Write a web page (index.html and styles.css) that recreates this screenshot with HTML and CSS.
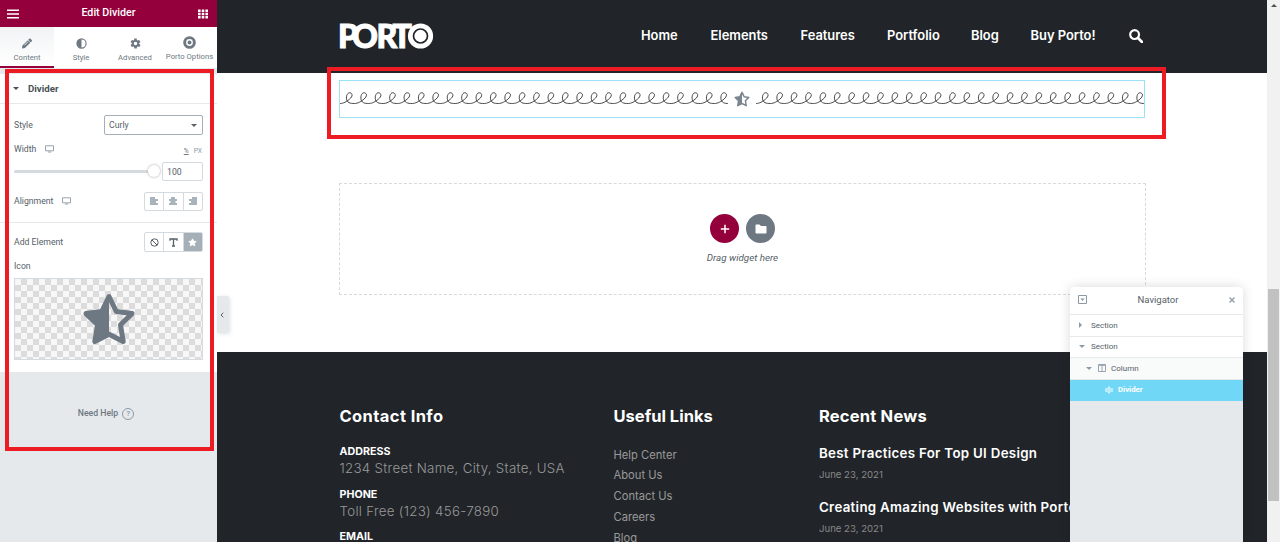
FILE: index.html
```html
<!DOCTYPE html>
<html lang="en">
<head>
    <meta charset="UTF-8">
    <meta name="viewport" content="width=device-width, initial-scale=1.0">
    <title>Edit Divider</title>
    <link rel="stylesheet" href="styles.css">
</head>
<body>
    <div class="editor">
        <aside class="panel">
            <header class="panel-header">
                <svg class="menu-icon" viewBox="0 0 12 10"><path d="M0 1.3h12M0 5h12M0 8.7h12" stroke="#fff" stroke-width="1.5"/></svg>
                <span class="panel-title">Edit Divider</span>
                <svg class="grid-icon" viewBox="0 0 10 10" fill="#fff"><path d="M0 .5h2.6v2.4H0zM3.7.5h2.6v2.4H3.7zM7.4.5H10v2.4H7.4zM0 3.8h2.6v2.4H0zM3.7 3.8h2.6v2.4H3.7zM7.4 3.8H10v2.4H7.4zM0 7.1h2.6v2.4H0zM3.7 7.1h2.6v2.4H3.7zM7.4 7.1H10v2.4H7.4z"/></svg>
            </header>
            <nav class="tabs">
                <a class="tab active">
                    <svg viewBox="0 0 512 512"><path fill="currentColor" d="M498 142l-46 46c-5 5-12 5-17 0L324 77c-5-5-5-12 0-17l46-46c19-19 49-19 68 0l60 60c19 19 19 49 0 68zM284 100L22 362 .4 484c-3 16 11 30 28 28l121-22 262-262c5-5 5-12 0-17L301 100c-5-5-12-5-17 0zM124 340c-5-5-5-14 0-19l154-154c5-5 14-5 19 0s5 14 0 19L143 340c-5 5-14 5-19 0z"/></svg>
                    <span>Content</span>
                </a>
                <a class="tab">
                    <svg viewBox="0 0 12 12"><circle cx="6" cy="6" r="5" fill="none" stroke="currentColor" stroke-width="1.2"/><path d="M6 1a5 5 0 0 0 0 10z" fill="currentColor"/></svg>
                    <span>Style</span>
                </a>
                <a class="tab">
                    <svg viewBox="1 1 22 22"><path fill="currentColor" fill-rule="evenodd" d="M19.4 13c0-.3.1-.6.1-1s0-.7-.1-1l2.1-1.6c.2-.2.3-.4.1-.7l-2-3.4c-.1-.2-.4-.3-.6-.2l-2.5 1c-.5-.4-1.1-.7-1.7-1l-.4-2.6c0-.3-.2-.5-.5-.5h-4c-.2 0-.5.2-.5.5L9.2 5.1c-.6.2-1.2.6-1.7 1l-2.5-1c-.2-.1-.5 0-.6.2l-2 3.4c-.1.3 0 .5.1.7L4.6 11c0 .3-.1.6-.1 1s0 .7.1 1l-2.1 1.6c-.2.2-.3.4-.1.7l2 3.4c.1.2.4.3.6.2l2.5-1c.5.4 1.1.7 1.7 1l.4 2.6c0 .3.3.5.5.5h4c.3 0 .5-.2.5-.5l.4-2.6c.6-.2 1.2-.6 1.7-1l2.5 1c.2.1.5 0 .6-.2l2-3.4c.1-.3.1-.5-.1-.7zM12 15.500a3.500 3.500 0 1 1 0-7 3.500 3.500 0 0 1 0 7z"/></svg>
                    <span>Advanced</span>
                </a>
                <a class="tab porto">
                    <svg viewBox="0 0 13 13"><circle cx="6.5" cy="6.5" r="6.3" fill="currentColor"/><circle cx="6.5" cy="6.5" r="2.7" fill="none" stroke="#fff" stroke-width="1.4"/></svg>
                    <span>Porto Options</span>
                </a>
            </nav>

            <div class="section-title"><i class="caret-down"></i>Divider</div>

            <div class="controls">
                <div class="control control-style">
                    <label>Style</label>
                    <div class="select">Curly<i class="caret-down"></i></div>
                </div>
                <div class="control control-width">
                    <label>Width</label>
                    <svg class="device" viewBox="0 0 9 8"><path d="M.5.8h8v5h-8zM2.8 7h3.4" fill="none" stroke="currentColor" stroke-width=".9"/></svg>
                    <div class="units"><span class="unit-active">%</span><span>PX</span></div>
                </div>
                <div class="control control-slider">
                    <div class="slider"><div class="track"></div><div class="handle"></div></div>
                    <div class="number">100</div>
                </div>
                <div class="control control-align">
                    <label>Alignment</label>
                    <svg class="device" viewBox="0 0 9 8"><path d="M.5.8h8v5h-8zM2.8 7h3.4" fill="none" stroke="currentColor" stroke-width=".9"/></svg>
                    <div class="choices">
                        <span><svg viewBox="0 0 8 8"><path d="M0 1h5M0 3h8M0 5h6M0 7h8" stroke="currentColor" stroke-width="1.5"/></svg></span>
                        <span><svg viewBox="0 0 8 8"><path d="M2 1h4M0 3h8M1.5 5h5M0 7h8" stroke="currentColor" stroke-width="1.5"/></svg></span>
                        <span><svg viewBox="0 0 8 8"><path d="M3 1h5M0 3h8M2 5h6M0 7h8" stroke="currentColor" stroke-width="1.5"/></svg></span>
                    </div>
                </div>
                <div class="control control-element">
                    <label>Add Element</label>
                    <div class="choices dark">
                        <span><svg viewBox="0 0 9 9"><circle cx="4.5" cy="4.5" r="3.7" fill="none" stroke="currentColor"/><path d="M2 2l5 5" stroke="currentColor"/></svg></span>
                        <span><svg viewBox="0 0 9 9"><path d="M1 2.800V1h7v1.800M4.500 1v7M3 8h3" fill="none" stroke="currentColor" stroke-width="1.3"/></svg></span>
                        <span class="selected"><svg viewBox="0 0 24 24"><path fill="currentColor" stroke="currentColor" stroke-width="2" stroke-linejoin="round" d="M12 2l3.100 6.300 6.900 1-5 4.900 1.200 6.900L12 17.800l-6.200 3.300L7 14.200 2 9.300l6.900-1z"/></svg></span>
                    </div>
                </div>
                <div class="control control-icon"><label>Icon</label></div>
                <div class="icon-preview">
                    <svg viewBox="0 0 54 52"><path d="M27 3.500l7.300 15L50 20.600 38.500 31.800l2.700 16.700L27 41.200 12.800 48.500l2.700-16.700L4 20.600l15.700-2.100z" fill="none" stroke="#6d7882" stroke-width="5" stroke-linejoin="round"/><path d="M27 3.500v37.700l-14.200 7.300 2.700-16.700L4 20.600l15.700-2.100z" fill="#6d7882"/></svg>
                </div>
            </div>

            <div class="help">
                <span>Need Help</span>
                <i>?</i>
            </div>
        </aside>

        <main class="preview">
            <header class="site-header">
                <svg class="logo" viewBox="0 0 96 28">
                    <text x="-1 13 37.5 53.5" y="24.8">PORT</text>
                    <circle cx="81.5" cy="13" r="12.6" fill="#fff"/>
                    <circle cx="81.5" cy="13" r="7" fill="none" stroke="#212529" stroke-width="1.7"/>
                </svg>
                <nav class="site-nav">
                    <a class="n-home">Home</a>
                    <a class="n-elements">Elements</a>
                    <a class="n-features">Features</a>
                    <a class="n-portfolio">Portfolio</a>
                    <a class="n-blog">Blog</a>
                    <a class="n-buy">Buy Porto!</a>
                </nav>
                <svg class="search" viewBox="0 0 14 14"><circle cx="5.6" cy="5.6" r="4.4" fill="none" stroke="#fff" stroke-width="2.2"/><path d="M9 9l4 4" stroke="#fff" stroke-width="2.6" stroke-linecap="round"/></svg>
            </header>

            <div class="widget">
                <svg class="curly" viewBox="0 0 388 15"><path transform="translate(0 12.5) scale(.6)"/></svg>
                <svg class="half-star" viewBox="0 0 54 52"><path d="M27 3.500l7.300 15L50 20.600 38.500 31.800l2.700 16.700L27 41.200 12.800 48.500l2.700-16.700L4 20.600l15.700-2.100z" fill="none" stroke="#7a8590" stroke-width="5" stroke-linejoin="round"/><path d="M27 3.500v37.700l-14.200 7.300 2.700-16.700L4 20.600l15.700-2.100z" fill="#7a8590"/></svg>
                <svg class="curly" viewBox="0 0 388 15"><path transform="translate(0 12.5) scale(.6)"/></svg>
            </div>

            <div class="drop-zone">
                <div class="drop-buttons">
                    <span class="add"><svg viewBox="0 0 10 10"><path d="M5 .8v8.400M.8 5h8.400" stroke="#fff" stroke-width="1.5"/></svg></span>
                    <span class="folder"><svg viewBox="0 0 12 10"><path fill="#fff" d="M1.300.500h3.200L6 2h4.700q.8 0 .8.800v5.900q0 .8-.8.800H1.300q-.8 0-.8-.8V1.300q0-.8.8-.8z"/></svg></span>
                </div>
                <p>Drag widget here</p>
            </div>

            <footer class="site-footer">
                <div class="contact">
                    <h4>Contact Info</h4>
                    <div class="contact-item"><strong>ADDRESS</strong><span>1234 Street Name, City, State, USA</span></div>
                    <div class="contact-item"><strong>PHONE</strong><span>Toll Free (123) 456-7890</span></div>
                    <div class="contact-item"><strong>EMAIL</strong></div>
                </div>
                <div class="links">
                    <h4>Useful Links</h4>
                    <a>Help Center</a>
                    <a>About Us</a>
                    <a>Contact Us</a>
                    <a>Careers</a>
                    <a>Blog</a>
                </div>
                <div class="news">
                    <h4>Recent News</h4>
                    <div class="post"><b>Best Practices For Top UI Design</b><span>June 23, 2021</span></div>
                    <div class="post"><b>Creating Amazing Websites with Porto</b><span>June 23, 2021</span></div>
                </div>
            </footer>
        </main>

        <div class="scrollbar">
            <i class="arrow-up"></i>
            <div class="thumb"></div>
        </div>

        <div class="collapse"><svg viewBox="0 0 4 6"><path d="M3.300.7L1 3l2.300 2.300" fill="none" stroke="#556068" stroke-width="1"/></svg></div>

        <div class="navigator">
            <div class="nav-title">
                <svg viewBox="0 0 9 9"><path d="M.5.5h8v8h-8z" fill="none" stroke="#8d9aa6"/><path d="M2.300 3.500h4.400L4.500 6z" fill="#8d9aa6"/></svg>
                <span>Navigator</span>
                <svg class="close" viewBox="0 0 6 6"><path d="M.5.5l5 5M5.500.5l-5 5" stroke="#8d9aa6" stroke-width="1.2"/></svg>
            </div>
            <div class="nav-row"><i class="caret-right"></i>Section</div>
            <div class="nav-row"><i class="caret-down"></i>Section</div>
            <div class="nav-row column"><i class="caret-down"></i><svg viewBox="0 0 8 8"><path d="M.5.5h7v7h-7zM4 .5v7M.5 1.300h7" fill="none" stroke="#8d9aa6" stroke-width=".9"/></svg>Column</div>
            <div class="nav-row current"><svg viewBox="0 0 8 8"><path d="M0 3h8M0 5h8" stroke="#fff" stroke-width="1"/><path d="M2.500 1.800L4 .2l1.500 1.600zM2.500 6.200L4 7.800l1.500-1.600z" fill="#fff"/></svg>Divider</div>
        </div>

        <div class="highlight highlight-panel"></div>
        <div class="highlight highlight-widget"></div>
    </div>

    <script>
        // one loop of the curly line, repeated along the divider
        const loop = 'c3.3,0,8.3-.9,15.7-7.1c6.6-5.4,4.4-9.3,2.4-10.3c-3.4-1.8-7.7,1.3-7.3,8.8c.4,7.6,6.3,8.6,13.2,8.6';
        document.querySelectorAll('.curly path').forEach(path => {
            path.setAttribute('d', 'M0,0' + loop.repeat(27));
        });
    </script>
</body>
</html>
```
FILE: styles.css
```css
:root {
    --brand: #93003c;
    --dark: #212529;
    --panel-bg: #e6e9ec;
    --text: #556068;
    --muted: #8d9aa6;
    --border: #d5dadf;
    --sky: #71d7f7;
    --red: #ed1c24;
}

* {
    margin: 0;
    padding: 0;
    box-sizing: border-box;
}

body {
    font-family: Roboto, "Liberation Sans", sans-serif;
    font-size: 8.7px;
    color: var(--text);
    overflow: hidden;
}

svg {
    display: block;
    flex: none;
}

.editor {
    position: relative;
    display: grid;
    grid-template-columns: 217px 1050px 13px;
    height: 542px;
    overflow: hidden;
}

/* left panel */
.panel {
    background: var(--panel-bg);
    overflow: hidden;
}

.panel-header {
    display: flex;
    align-items: center;
    justify-content: space-between;
    height: 27px;
    padding: 0 9px 3px 7px;
    background: var(--brand);
    color: #fff;
}

.menu-icon {
    width: 12px;
    height: 10px;
    margin-top: 3px;
}

.grid-icon {
    width: 10px;
    height: 10px;
    margin-top: 3px;
}

.panel-title {
    font-size: 10.7px;
    font-weight: 500;
}

.tabs {
    display: grid;
    grid-template-columns: 54px 54px 54px 55px;
    height: 41px;
    background: #fff;
}

.tab {
    display: flex;
    flex-direction: column;
    align-items: center;
    padding-top: 11px;
    font-size: 7.7px;
    color: #6d7882;
    white-space: nowrap;
}

.tab svg {
    width: 11px;
    height: 11px;
    margin-bottom: 4px;
}

.tab.active {
    background: linear-gradient(#f1f3f5, #fff);
    border-bottom: 2px solid var(--brand);
}

.tab.active svg {
    width: 10px;
}

.tab.porto {
    padding-top: 9px;
}

.tab.porto svg {
    width: 13px;
    height: 13px;
    margin-bottom: 3px;
}

.caret-down {
    border: 3px solid transparent;
    border-top-color: currentColor;
    border-bottom: 0;
}

.caret-right {
    border: 3px solid transparent;
    border-left-color: currentColor;
    border-right: 0;
}

.section-title {
    display: flex;
    align-items: center;
    gap: 9px;
    height: 30px;
    margin-top: 6px;
    padding-left: 13px;
    background: #fff;
    border-bottom: 1px solid var(--panel-bg);
    font-size: 9.7px;
    font-weight: 700;
    color: #495157;
}

.controls {
    height: 268px;
    padding-top: 11px;
    background: #fff;
}

.control {
    display: flex;
    align-items: center;
    padding: 0 14px;
}

.control-style {
    height: 20px;
    justify-content: space-between;
}

.select {
    display: flex;
    align-items: center;
    justify-content: space-between;
    width: 99px;
    height: 20px;
    padding: 0 5px 0 4px;
    border: 1px solid #a4afb7;
    border-radius: 2px;
}

.device {
    width: 9px;
    height: 8px;
    margin-left: 9px;
    color: var(--muted);
}

.control-width {
    height: 12px;
    margin-top: 8px;
}

.units {
    display: flex;
    gap: 5px;
    margin: 4px 1px 0 auto;
    font-size: 6.7px;
    color: var(--muted);
}

.unit-active {
    text-decoration: underline;
    color: #6d7882;
}

.control-slider {
    height: 18px;
    margin-top: 7px;
    gap: 2px;
}

.slider {
    display: flex;
    align-items: center;
    width: 146px;
}

.track {
    flex: 1;
    height: 3px;
    border-radius: 2px;
    background: var(--border);
}

.handle {
    width: 12px;
    height: 12px;
    border-radius: 50%;
    background: #fff;
    box-shadow: 0 0 3px rgba(0, 0, 0, .35);
}

.number {
    flex: 1;
    height: 19px;
    padding-left: 4px;
    border: 1px solid var(--border);
    border-radius: 2px;
    line-height: 18px;
}

.control-align {
    height: 20px;
    margin-top: 11px;
}

.choices {
    display: flex;
    width: 59px;
    height: 19px;
    margin-left: auto;
    border: 1px solid var(--border);
    border-radius: 2px;
    overflow: hidden;
    color: var(--muted);
}

.choices span {
    flex: 1;
    display: flex;
    align-items: center;
    justify-content: center;
}

.choices span + span {
    border-left: 1px solid var(--border);
}

.choices svg {
    width: 8px;
    height: 8px;
}

.choices.dark {
    height: 20px;
    color: #556068;
}

.choices.dark svg {
    width: 9px;
    height: 9px;
}

.choices .selected {
    background: #a4afb7;
    color: #fff;
}

.control-element {
    height: 39px;
    margin-top: 11px;
    border-top: 1px solid var(--panel-bg);
}

.control-icon {
    height: 14px;
    margin-top: -2px;
}

.control-icon label {
    margin-top: -1px;
}

.icon-preview {
    display: flex;
    align-items: center;
    justify-content: center;
    width: 189px;
    height: 82px;
    margin: 5px 0 0 14px;
    border: 1px solid var(--border);
    background: conic-gradient(#dcdcdc 25%, #f7f7f7 0 50%, #dcdcdc 0 75%, #f7f7f7 0) 0 0 / 12px 12px;
}

.icon-preview svg {
    width: 54px;
    height: 52px;
}

.help {
    display: flex;
    align-items: center;
    justify-content: center;
    gap: 4px;
    height: 82px;
    padding-right: 5px;
    font-weight: 500;
    color: #6d7882;
}

.help i {
    width: 12px;
    height: 12px;
    margin-top: 2px;
    border: 1px solid var(--muted);
    border-radius: 50%;
    font-size: 8px;
    font-style: normal;
    line-height: 10px;
    text-align: center;
    color: var(--muted);
}

/* page preview */
.preview {
    display: flex;
    flex-direction: column;
    background: #fff;
    font-family: Inter, "Open Sans", sans-serif;
    overflow: hidden;
}

.site-header {
    display: flex;
    align-items: center;
    height: 73px;
    padding: 0 124px 2px 122px;
    background: var(--dark);
    color: #fff;
}

.logo {
    width: 96px;
    height: 28px;
    margin-top: 2px;
    overflow: visible;
}

.logo text {
    font-family: Lato, sans-serif;
    font-size: 32px;
    font-weight: 900;
    fill: #fff;
    stroke: #fff;
    stroke-width: 1px;
}

.site-nav {
    display: flex;
    margin-left: 206px;
    font-size: 12.9px;
    font-weight: 600;
    white-space: nowrap;
}

.n-home { width: 69.5px; }
.n-elements { width: 90px; }
.n-features { width: 86.5px; }
.n-portfolio { width: 84px; }
.n-blog { width: 59.5px; }
.n-buy { width: 98.5px; }

.search {
    width: 14px;
    height: 14px;
}

.widget {
    display: flex;
    justify-content: space-between;
    width: 806px;
    height: 38px;
    margin: 7px 0 0 122px;
    padding-top: 10px;
    border: 1px solid #9be1f7;
}

.curly {
    width: 388px;
    height: 15px;
    overflow: hidden;
}

.curly path {
    fill: none;
    stroke: #333;
    stroke-width: 1.5px;
}

.half-star {
    width: 16px;
    height: 16px;
}

.drop-zone {
    display: flex;
    flex-direction: column;
    align-items: center;
    width: 807px;
    height: 112px;
    margin: 65px 0 0 122px;
    padding-top: 30px;
    border: 1px dashed var(--border);
}

.drop-buttons {
    display: flex;
    gap: 7px;
}

.drop-buttons span {
    display: flex;
    align-items: center;
    justify-content: center;
    width: 29px;
    height: 29px;
    border-radius: 50%;
}

.add {
    background: var(--brand);
}

.folder {
    background: #6d7882;
}

.drop-buttons svg {
    width: 10px;
    height: 10px;
}

.drop-buttons .folder svg {
    width: 12px;
}

.drop-zone p {
    margin-top: 8px;
    font: italic 9.8px/14px Roboto, sans-serif;
}

.site-footer {
    display: grid;
    grid-template-columns: 274px 205.5px 1fr;
    flex: 1;
    min-height: 0;
    margin-top: 57px;
    padding: 52px 0 0 122.5px;
    background: var(--dark);
    color: #fff;
    white-space: nowrap;
}

.site-footer h4 {
    height: 39px;
    font-size: 16.5px;
    line-height: 24px;
}

.contact h4 {
    letter-spacing: .4px;
}

.contact-item {
    display: flex;
    flex-direction: column;
    margin-bottom: 8.5px;
    line-height: 17px;
}

.contact-item strong {
    font-size: 10.7px;
    font-weight: 700;
}

.contact-item span {
    font-size: 13.3px;
    font-weight: 300;
    letter-spacing: .3px;
    color: #999;
}

.links a {
    display: block;
    font-size: 11.2px;
    line-height: 20.8px;
    color: #999;
}

.links h4 {
    height: 40.5px;
}

.news h4 {
    height: 38px;
    letter-spacing: .2px;
}

.post {
    display: flex;
    flex-direction: column;
    margin-bottom: 10px;
    line-height: 22px;
}

.post b {
    font-size: 13.3px;
    font-weight: 600;
    letter-spacing: .3px;
}

.post span {
    font-size: 9.6px;
    color: #888;
}

.scrollbar {
    display: flex;
    flex-direction: column;
    align-items: center;
    background: #f1f1f1;
}

.arrow-up {
    margin-top: 4px;
    border: 3px solid transparent;
    border-bottom-color: #505050;
    border-top: 0;
}

.thumb {
    width: 11px;
    height: 212px;
    margin-top: 282px;
    background: #c1c1c1;
}

/* things floating over the page */
.collapse {
    position: absolute;
    left: 217px;
    top: 296px;
    display: flex;
    align-items: center;
    width: 12px;
    height: 37px;
    padding-left: 3px;
    background: var(--panel-bg);
    border-radius: 0 2px 2px 0;
    box-shadow: 1px 1px 4px rgba(0, 0, 0, .12);
}

.collapse svg {
    width: 4px;
    height: 6px;
}

.navigator {
    position: absolute;
    left: 1070px;
    top: 287px;
    width: 173px;
    height: 260px;
    background: var(--panel-bg);
    border-radius: 4px 4px 0 0;
    box-shadow: 0 0 12px rgba(0, 0, 0, .15);
    overflow: hidden;
    font-size: 8px;
}

.nav-title {
    display: flex;
    align-items: center;
    justify-content: space-between;
    height: 28px;
    padding: 0 8px 2px;
    background: #fff;
    border-bottom: 1px solid var(--panel-bg);
    font-size: 9.5px;
}

.nav-title svg {
    width: 9px;
    height: 9px;
}

.nav-title .close {
    width: 6px;
    height: 6px;
}

.nav-row {
    display: flex;
    align-items: center;
    height: 21.5px;
    padding-left: 9px;
    background: #fff;
    border-bottom: 1px solid var(--panel-bg);
}

.nav-row i {
    color: var(--muted);
    margin-right: 6px;
}

.nav-row .caret-right {
    margin-right: 9px;
}

.nav-row svg {
    width: 8px;
    height: 8px;
    margin-right: 5px;
}

.nav-row.column {
    padding-left: 16px;
    background: #f9fafa;
}

.nav-row.current {
    height: 21px;
    padding: 0 0 1px 35px;
    background: var(--sky);
    border: 0;
    color: #fff;
    font-size: 7.8px;
    font-weight: 700;
}

.highlight {
    position: absolute;
    border: 4px solid var(--red);
}

.highlight-panel {
    left: 5px;
    top: 69px;
    width: 209px;
    height: 382px;
}

.highlight-widget {
    left: 327px;
    top: 67px;
    width: 839px;
    height: 72px;
}
```
